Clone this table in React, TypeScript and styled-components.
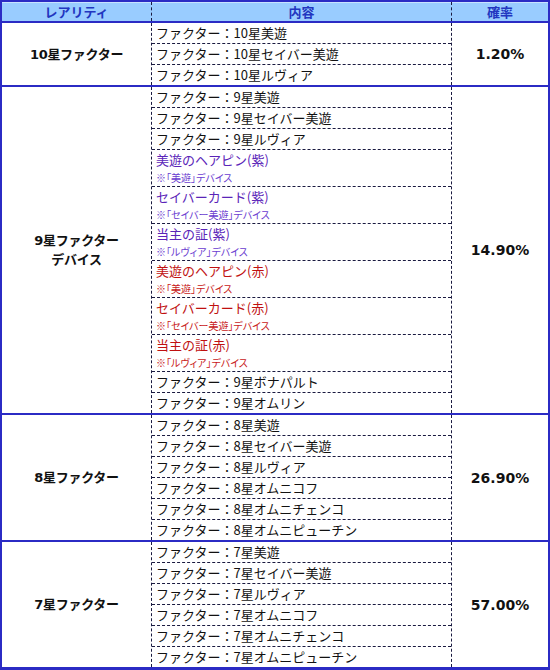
import React from "react";
import styled, { createGlobalStyle } from "styled-components";

const Global = createGlobalStyle`
  html, body { margin: 0; padding: 0; background: #ffffff; }
  body { font-family: "Noto Sans CJK JP", "DejaVu Sans", sans-serif; }
`;

const BLUE = "#2b2bc4";
const DASH = "1px dashed #1a1a40";

const Table = styled.div`
  width: 550px;
  box-sizing: border-box;
  border: 2px solid ${BLUE};
  border-bottom-width: 3px;
  background: #ffffff;
`;

const Cols = styled.div`
  display: grid;
  grid-template-columns: 150px 300px 1fr;
`;

const Header = styled(Cols)`
  background: #99ccff;
  border-bottom: 2px solid ${BLUE};
  box-shadow: inset 0 1px 0 #c8e2ff;
  height: 19px;
`;

const HeadCell = styled.div<{ $last?: boolean }>`
  display: flex;
  align-items: center;
  justify-content: center;
  font-family: "Noto Sans CJK JP", sans-serif;
  font-weight: 700;
  font-size: 13px;
  color: #2236c0;
  border-right: ${(p) => (p.$last ? "none" : DASH)};
  line-height: 1;
`;

const Group = styled(Cols)<{ $last?: boolean }>`
  border-bottom: ${(p) => (p.$last ? "none" : `2px solid ${BLUE}`)};
`;

const Rarity = styled.div`
  display: flex;
  flex-direction: column;
  align-items: center;
  justify-content: center;
  border-right: ${DASH};
  font-family: "DejaVu Sans", "Noto Sans CJK JP", sans-serif;
  font-weight: 700;
  font-size: 13px;
  line-height: 19px;
  color: #111;
  letter-spacing: -0.3px;
`;

const Items = styled.div`
  display: flex;
  flex-direction: column;
  border-right: ${DASH};
`;

const Item = styled.div<{ $color: string }>`
  display: flex;
  flex-direction: column;
  justify-content: center;
  padding-left: 4px;
  min-height: 20px;
  color: ${(p) => p.$color};
  border-bottom: ${DASH};
  &:last-child { border-bottom: none; }
`;

const Main = styled.span`
  font-family: "Noto Sans CJK JP", sans-serif;
  font-size: 13px;
  line-height: 20px;
  height: 20px;
`;

const Colon = styled.span`
  font-family: "Noto Sans CJK TC", sans-serif;
`;

const Note = styled.span<{ $color: string }>`
  font-family: "Noto Sans CJK JP", sans-serif;
  font-size: 10px;
  line-height: 16px;
  height: 16px;
  font-feature-settings: "palt";
  color: ${(p) => p.$color};
`;

const Rate = styled.div`
  display: flex;
  align-items: center;
  justify-content: center;
  font-family: "DejaVu Sans", sans-serif;
  font-weight: 700;
  font-size: 14px;
  color: #111;
`;

type Entry = { text: string; note?: string; tone?: "purple" | "red"; factor?: boolean };

const COLORS = { plain: "#111111", purple: "#5a24b8", red: "#c01010" };
const NOTE_COLORS = { plain: "#111111", purple: "#6a3cd0", red: "#c81818" };

const f = (s: string): Entry => ({ text: s, factor: true });

const groups: { rarity: string[]; rate: string; items: Entry[] }[] = [
  {
    rarity: ["10星ファクター"],
    rate: "1.20%",
    items: [f("10星美遊"), f("10星セイバー美遊"), f("10星ルヴィア")],
  },
  {
    rarity: ["9星ファクター", "デバイス"],
    rate: "14.90%",
    items: [
      f("9星美遊"),
      f("9星セイバー美遊"),
      f("9星ルヴィア"),
      { text: "美遊のヘアピン(紫)", note: "※「美遊」デバイス", tone: "purple" },
      { text: "セイバーカード(紫)", note: "※「セイバー美遊」デバイス", tone: "purple" },
      { text: "当主の証(紫)", note: "※「ルヴィア」デバイス", tone: "purple" },
      { text: "美遊のヘアピン(赤)", note: "※「美遊」デバイス", tone: "red" },
      { text: "セイバーカード(赤)", note: "※「セイバー美遊」デバイス", tone: "red" },
      { text: "当主の証(赤)", note: "※「ルヴィア」デバイス", tone: "red" },
      f("9星ボナパルト"),
      f("9星オムリン"),
    ],
  },
  {
    rarity: ["8星ファクター"],
    rate: "26.90%",
    items: [
      f("8星美遊"),
      f("8星セイバー美遊"),
      f("8星ルヴィア"),
      f("8星オムニコフ"),
      f("8星オムニチェンコ"),
      f("8星オムニピューチン"),
    ],
  },
  {
    rarity: ["7星ファクター"],
    rate: "57.00%",
    items: [
      f("7星美遊"),
      f("7星セイバー美遊"),
      f("7星ルヴィア"),
      f("7星オムニコフ"),
      f("7星オムニチェンコ"),
      f("7星オムニピューチン"),
    ],
  },
];

export default function App() {
  return (
    <>
      <Global />
      <Table>
        <Header>
          <HeadCell>レアリティ</HeadCell>
          <HeadCell>内容</HeadCell>
          <HeadCell $last>確率</HeadCell>
        </Header>
        {groups.map((g, gi) => (
          <Group key={gi} $last={gi === groups.length - 1}>
            <Rarity>
              {g.rarity.map((r) => (
                <span key={r}>{r}</span>
              ))}
            </Rarity>
            <Items>
              {g.items.map((it, i) => {
                const tone = it.tone ?? "plain";
                return (
                  <Item key={i} $color={COLORS[tone]}>
                    <Main>
                      {it.factor ? (
                        <>
                          ファクター<Colon>：</Colon>
                          {it.text}
                        </>
                      ) : (
                        it.text
                      )}
                    </Main>
                    {it.note && <Note $color={NOTE_COLORS[tone]}>{it.note}</Note>}
                  </Item>
                );
              })}
            </Items>
            <Rate>{g.rate}</Rate>
          </Group>
        ))}
      </Table>
    </>
  );
}
